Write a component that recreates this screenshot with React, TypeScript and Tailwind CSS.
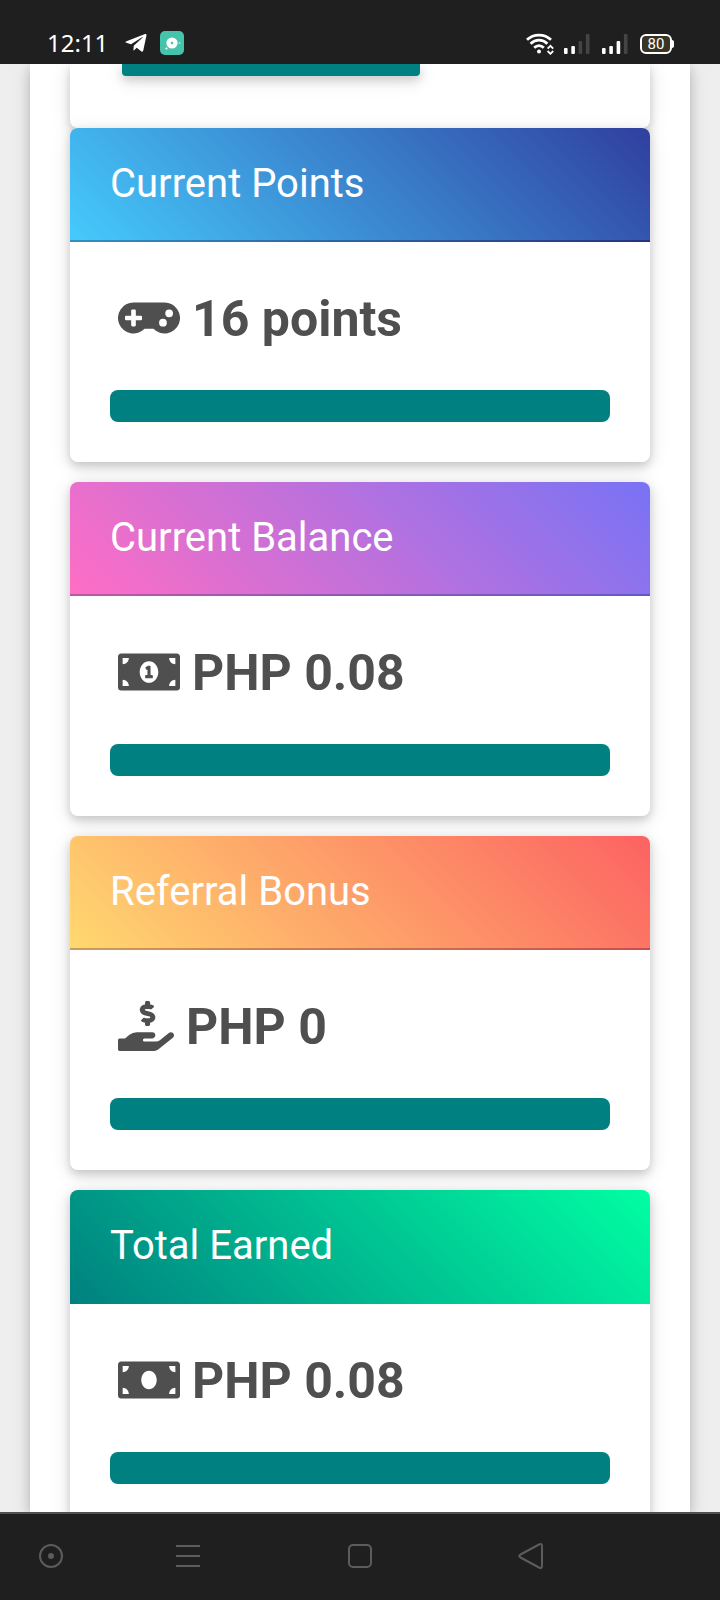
import type { ReactNode } from "react";
import type { IconType } from "react-icons";
import {
  FaGamepad,
  FaHandHoldingUsd,
  FaMoneyBill,
  FaMoneyBillAlt,
  FaTelegramPlane,
} from "react-icons/fa";

type Stat = {
  title: string;
  value: string;
  icon: IconType;
  iconWidth: string;
  header: string;
};

const stats: Stat[] = [
  {
    title: "Current Points",
    value: "16 points",
    icon: FaGamepad,
    iconWidth: "w-[62px]",
    header:
      "border-b-2 border-black/20 bg-[linear-gradient(45deg,#45cafc,#303f9f)]",
  },
  {
    title: "Current Balance",
    value: "PHP 0.08",
    icon: FaMoneyBillAlt,
    iconWidth: "w-[62px]",
    header:
      "border-b-2 border-black/20 bg-[linear-gradient(45deg,#ff6ec4,#7873f5)]",
  },
  {
    title: "Referral Bonus",
    value: "PHP 0",
    icon: FaHandHoldingUsd,
    iconWidth: "w-14",
    header:
      "border-b-2 border-black/20 bg-[linear-gradient(45deg,#ffd86f,#fc6262)]",
  },
  {
    title: "Total Earned",
    value: "PHP 0.08",
    icon: FaMoneyBill,
    iconWidth: "w-[62px]",
    header: "bg-[linear-gradient(45deg,#008080,#00ffa3)]",
  },
];

function Signal({ level }: { level: number }) {
  return (
    <svg width="26" height="20" viewBox="0 0 26 20" aria-hidden="true">
      {[6, 8, 13, 20].map((h, i) => (
        <rect
          key={h}
          x={i * 7.3}
          y={20 - h}
          width="3.6"
          height={h}
          rx="1"
          fill={i < level ? "#fff" : "#444"}
        />
      ))}
    </svg>
  );
}

function StatusBar() {
  return (
    <header className="flex h-16 shrink-0 items-end justify-between bg-[#1f1f1f] pr-[46px] pb-[9px] pl-[47px] text-white">
      <div className="flex items-center">
        <time className="mr-4 font-['Noto_Sans',sans-serif] text-2xl leading-6">
          12:11
        </time>
        <FaTelegramPlane className="mr-3 size-6" aria-hidden="true" />
        <svg width="24" height="24" viewBox="0 0 24 24" aria-hidden="true">
          <rect width="24" height="24" rx="5" fill="#45c4ab" />
          <circle cx="12" cy="12" r="5.6" fill="#fff" />
          <circle cx="12" cy="12" r="1.3" fill="#45c4ab" />
          <circle cx="6.5" cy="17.5" r="1.1" fill="#fff" />
          <circle cx="19.5" cy="12" r="0.9" fill="#a5e3d7" />
        </svg>
      </div>
      <div className="flex items-center">
        <svg
          className="mr-2.5"
          width="28"
          height="22"
          viewBox="0 0 28 22"
          fill="none"
          stroke="#fff"
          strokeWidth="2.8"
          aria-hidden="true"
        >
          <path d="M1 6.8C7.5 0.5 18.5 0.5 25 6.8" />
          <path d="M4.6 10.8C9.5 6 16.5 6 21.4 10.8" />
          <path d="M8.2 14.8C11 12 15 12 17.8 14.8" />
          <circle cx="13" cy="18.5" r="2" fill="#fff" stroke="none" />
          <path d="M21.6 15.6L24.4 12.8L27.2 15.6M21.6 18L24.4 20.8L27.2 18" strokeWidth="1.8" />
        </svg>
        <span className="mr-3">
          <Signal level={2} />
        </span>
        <span className="mr-3">
          <Signal level={3} />
        </span>
        <span className="flex items-center">
          <span className="flex h-5 w-8 items-center justify-center rounded-md border-2 border-white bg-[#3a3522] font-['Roboto',sans-serif] text-[15px] leading-4">
            80
          </span>
          <span className="h-2 w-0.5 rounded-r-sm bg-white" />
        </span>
      </div>
    </header>
  );
}

function StatCard({ title, value, icon: Icon, iconWidth, header }: Stat) {
  return (
    <section className="shrink-0 rounded-lg bg-white shadow-[0_4px_10px_rgba(0,0,0,0.16),0_4px_20px_rgba(0,0,0,0.12)]">
      <h2
        className={`h-[114px] rounded-t-lg px-10 pt-8 text-[40px] leading-12 text-white ${header}`}
      >
        {title}
      </h2>
      <div className="px-10 pb-10">
        <p className="flex h-[148px] items-center gap-3 px-2 pt-1.5 text-[50px] leading-15 font-bold text-[#4f4f4f]">
          <Icon className={`mb-0.5 h-[50px] ${iconWidth}`} aria-hidden="true" />
          {value}
        </p>
        <div className="h-8 rounded-lg bg-[#008080]" />
      </div>
    </section>
  );
}

function NavButton({ label, children }: { label: string; children: ReactNode }) {
  return (
    <button type="button" aria-label={label} className="size-7">
      <svg
        viewBox="0 0 28 28"
        fill="none"
        stroke="#5c5c5c"
        strokeWidth="2"
        strokeLinejoin="round"
      >
        {children}
      </svg>
    </button>
  );
}

function NavBar() {
  return (
    <nav className="grid h-[88px] shrink-0 grid-cols-[102px_172px_172px_170px] items-center justify-items-center border-t-2 border-[#505050] bg-[#1f1f1f] pb-0.5">
      <NavButton label="Assistant">
        <circle cx="14" cy="14" r="11" />
        <circle cx="14" cy="14" r="3" fill="#5c5c5c" stroke="none" />
      </NavButton>
      <NavButton label="Recent apps">
        <path d="M2 4H26M2 14H26M2 24H26" />
      </NavButton>
      <NavButton label="Home">
        <rect x="3" y="3" width="22" height="22" rx="4" />
      </NavButton>
      <NavButton label="Back">
        <path d="M25 4V24Q25 27 22 25.500L3.500 15.500Q1 14 3.500 12.500L22 2.500Q25 1 25 4Z" />
      </NavButton>
    </nav>
  );
}

export default function App() {
  return (
    <div className="flex h-screen flex-col bg-[#eeeeee] font-['Roboto',sans-serif]">
      <StatusBar />
      <main className="min-h-0 flex-1 overflow-hidden px-[30px]">
        <div className="flex h-full flex-col bg-white px-10 shadow-[0_4px_10px_rgba(0,0,0,0.16),0_4px_20px_rgba(0,0,0,0.12)]">
          <div className="h-16 shrink-0 rounded-b-lg bg-white px-[52px] shadow-[0_4px_10px_rgba(0,0,0,0.16),0_4px_20px_rgba(0,0,0,0.12)]">
            <div className="h-3 w-[298px] rounded-b bg-[#008080] shadow-[0_4px_10px_rgba(0,0,0,0.16),0_4px_20px_rgba(0,0,0,0.12)]" />
          </div>
          <div className="flex flex-col gap-5">
            {stats.map((stat) => (
              <StatCard key={stat.title} {...stat} />
            ))}
          </div>
        </div>
      </main>
      <NavBar />
    </div>
  );
}
